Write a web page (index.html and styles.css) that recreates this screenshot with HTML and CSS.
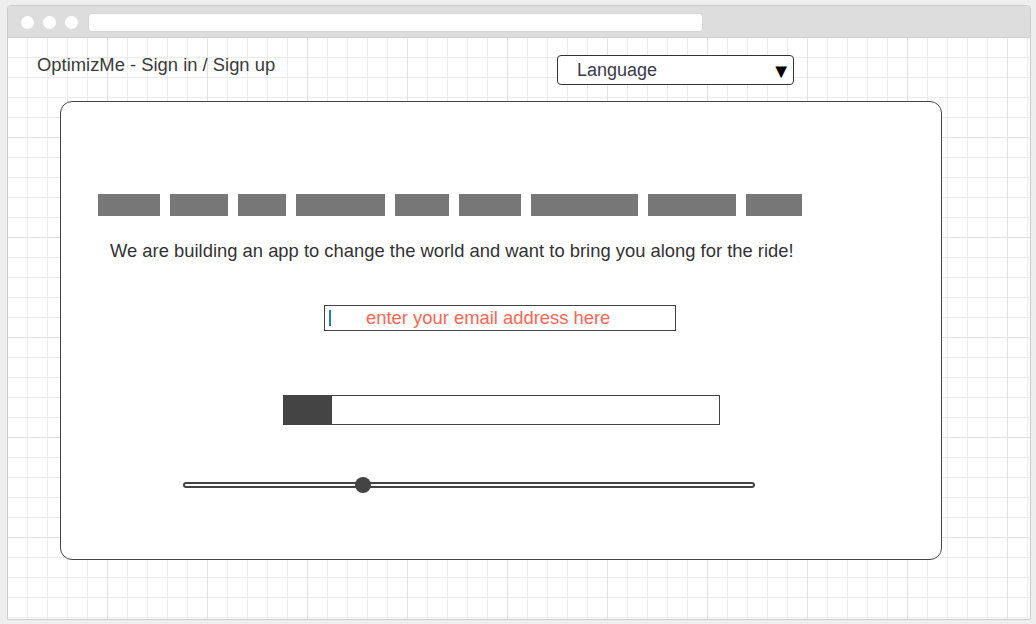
FILE: index.html
```html
<!DOCTYPE html>
<html>
<head>
<meta charset="utf-8">
<link rel="stylesheet" href="styles.css">
</head>
<body>
<div class="window">
  <div class="titlebar">
    <span class="dot"></span><span class="dot"></span><span class="dot"></span>
    <div class="url"></div>
  </div>
  <div class="canvas">
    <div class="topline">
      <span class="title">OptimizMe - Sign in / Sign up</span>
      <div class="select"><span class="select-label">Language</span><span class="arrow">▼</span></div>
    </div>
    <div class="card">
      <div class="blocks">
        <span class="blk" style="width:62px"></span>
        <span class="blk" style="width:58px"></span>
        <span class="blk" style="width:48px"></span>
        <span class="blk" style="width:89px"></span>
        <span class="blk" style="width:54px"></span>
        <span class="blk" style="width:62px"></span>
        <span class="blk" style="width:107px"></span>
        <span class="blk" style="width:88px"></span>
        <span class="blk" style="width:56px"></span>
      </div>
      <p class="lead">We are building an app to change the world and want to bring you along for the ride!</p>
      <div class="email"><span class="caret"></span><span class="placeholder">enter your email address here</span></div>
      <div class="progress"><div class="fill" style="width:48px"></div></div>
      <div class="slider"><div class="track"></div><div class="thumb"></div></div>
    </div>
  </div>
</div>
</body>
</html>
```
FILE: styles.css
```css
html, body { margin: 0; padding: 0; }
body {
  background: #eeeeee;
  font-family: "Liberation Sans", Arial, sans-serif;
  color: #333;
}
.window {
  margin: 5px 0 0 7px;
  width: 1022px;
  height: 613px;
  border: 1px solid #cccccc;
  border-radius: 4px 4px 0 0;
  background: #fff;
  display: flex;
  flex-direction: column;
  overflow: hidden;
}
.titlebar {
  background: #dddddd;
  border-bottom: 1px solid #cfcfcf;
  display: flex;
  align-items: center;
  padding-left: 13px;
  box-sizing: border-box;
  height: 32px;
}
.dot {
  width: 13px;
  height: 13px;
  border-radius: 50%;
  background: #fff;
  margin-right: 9px;
  margin-top: 1px;
}
.url {
  margin-left: 1px;
  width: 615px;
  height: 19px;
  background: #fff;
  border-radius: 4px;
  border: 1px solid #d4d4d4;
  box-sizing: border-box;
  margin-top: 1px;
}
.canvas {
  flex: 1;
  background-color: #fff;
  background-image:
    linear-gradient(to right, #e2e2e2 1px, transparent 1px),
    linear-gradient(to bottom, #e2e2e2 1px, transparent 1px),
    linear-gradient(to right, #ececec 1px, transparent 1px),
    linear-gradient(to bottom, #ececec 1px, transparent 1px);
  background-size: 100px 100px, 100px 100px, 20px 20px, 20px 20px;
  background-position: 99px 99px, 99px 99px, 19px 19px, 19px 19px;
  padding-top: 17px;
  box-sizing: border-box;
}
.topline {
  display: flex;
  align-items: flex-start;
  padding-left: 29px;
  height: 30px;
}
.title {
  width: 520px;
  font-size: 18.4px;
  line-height: 20px;
  color: #3a3a3a;
}
.select {
  width: 237px;
  height: 30px;
  box-sizing: border-box;
  border: 1px solid #333;
  border-radius: 4px;
  background: #fff;
  display: flex;
  align-items: center;
  justify-content: space-between;
  padding: 0 2px 0 19px;
}
.select-label { font-size: 18px; color: #3a3a4a; }
.arrow { font-size: 20px; color: #000; margin-top: 3px; }
.card {
  margin: 16px 0 0 52px;
  width: 882px;
  height: 459px;
  box-sizing: border-box;
  border: 1px solid #444;
  border-radius: 12px;
  background: #fff;
  display: flex;
  flex-direction: column;
  align-items: flex-start;
}
.blocks {
  display: flex;
  gap: 10px;
  margin: 92px 0 0 37px;
}
.blk { display: block; height: 22px; background: #777; }
.lead {
  margin: 24px 0 0 49px;
  font-size: 18.4px;
  line-height: 22px;
  color: #333;
}
.email {
  margin: 43px 0 0 263px;
  width: 352px;
  height: 26px;
  box-sizing: border-box;
  border: 1px solid #444;
  display: flex;
  align-items: center;
  padding-left: 4px;
}
.caret { width: 2px; height: 16px; background: #1a7fd0; }
.placeholder { margin-left: 35px; font-size: 18.4px; color: #ff6652; line-height: 20px; }
.progress {
  margin: 64px 0 0 222px;
  width: 437px;
  height: 30px;
  box-sizing: border-box;
  border: 1px solid #444;
  background: #fff;
  display: flex;
}
.fill { height: 100%; background: #444; }
.slider {
  margin: 51px 0 0 122px;
  width: 572px;
  height: 18px;
  display: flex;
  align-items: center;
  position: relative;
}
.track {
  width: 100%;
  height: 6px;
  box-sizing: border-box;
  border: 2px solid #444;
  border-radius: 3px;
  background: #fff;
}
.thumb {
  position: absolute;
  left: 172px;
  top: 1px;
  width: 16px;
  height: 16px;
  border-radius: 50%;
  background: #444;
}
```
